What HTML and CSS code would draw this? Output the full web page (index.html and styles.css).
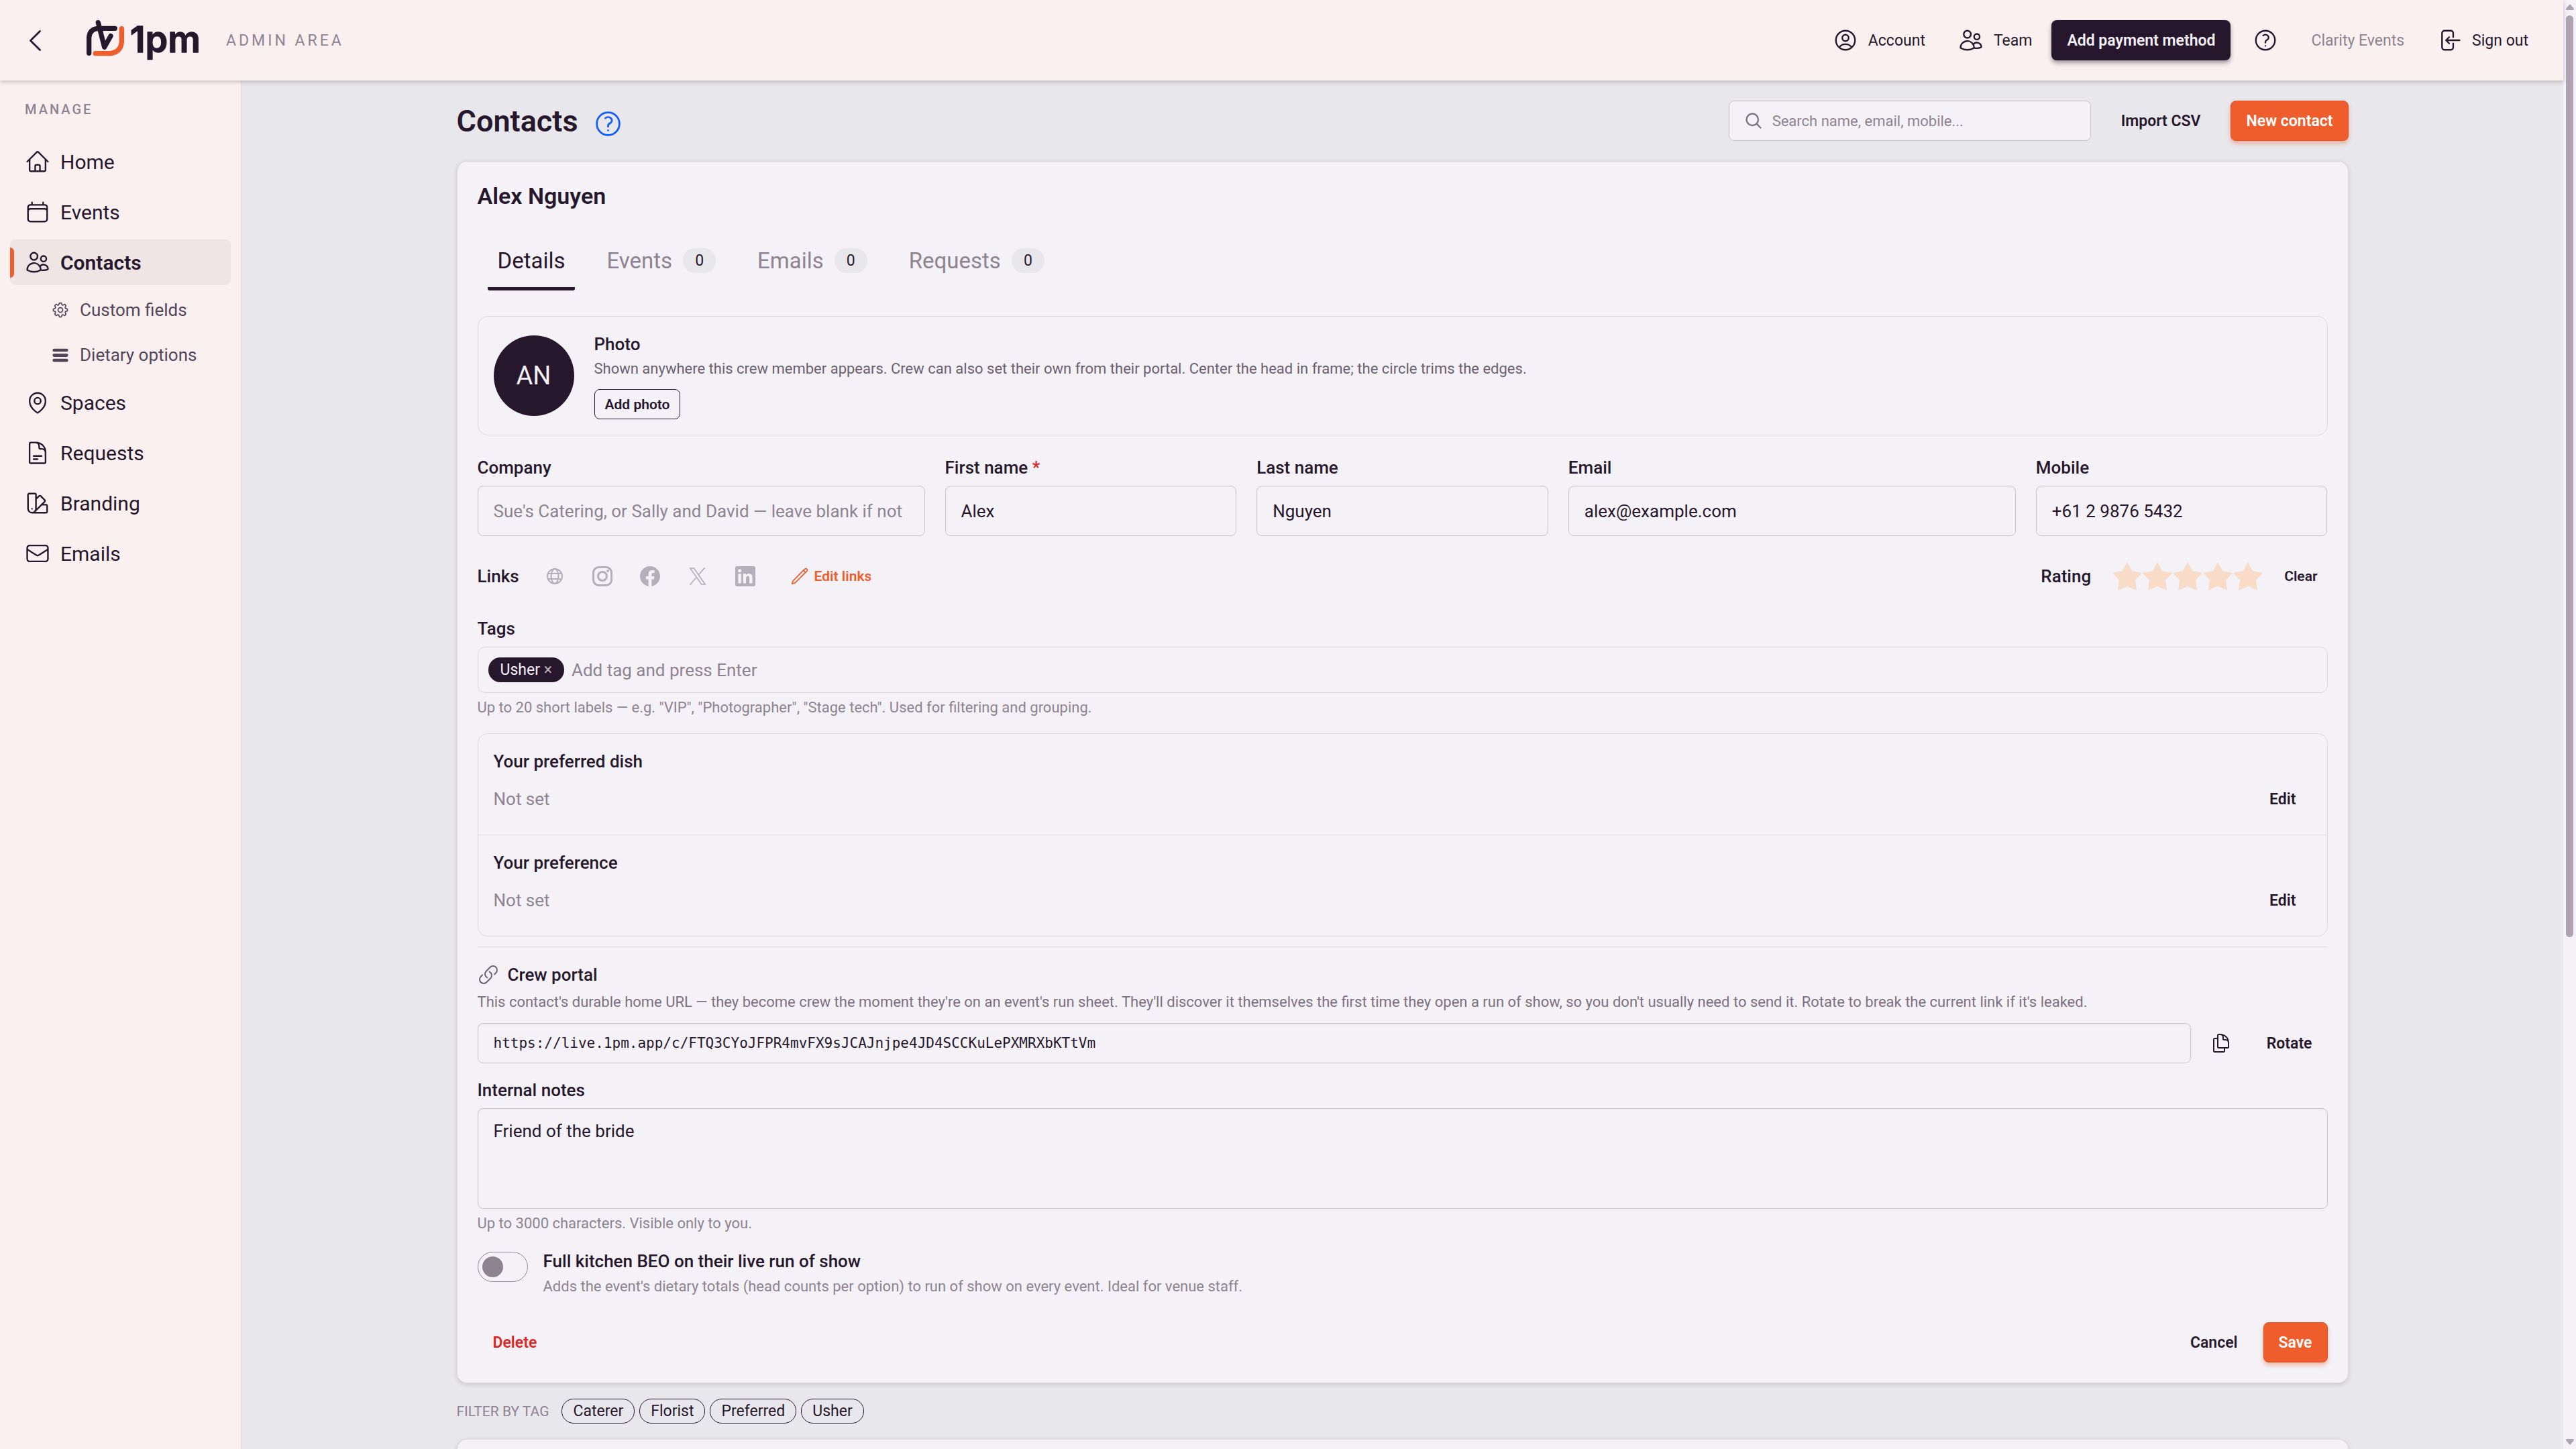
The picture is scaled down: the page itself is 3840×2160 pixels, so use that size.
FILE: index.html
```html
<!DOCTYPE html>
<html lang="en">
<head>
    <meta charset="UTF-8">
    <meta name="viewport" content="width=device-width, initial-scale=1.0">
    <title>Contacts - 1pm</title>
    <link rel="stylesheet" href="styles.css">
</head>
<body>

    <div class="app">
        <header class="topbar">
            <a href="#" class="back" aria-label="Back">
                <svg class="icon icon-lg" viewBox="0 0 24 24"><path d="M15.75 19.5 8.25 12l7.5-7.5"/></svg>
            </a>
            <a href="#" class="logo" aria-label="1pm">
                <svg viewBox="57 30 507 180">
                    <path class="logo-dark" d="M68 178V108Q70 72 106 67H184M109 41L137 151L165 101"/>
                    <path class="logo-orange" d="M214 68V128Q210 172 166 179H97"/>
                    <text class="logo-text" x="251" y="175">1pm</text>
                </svg>
            </a>
            <span class="area">ADMIN AREA</span>

            <nav class="topnav">
                <a href="#" class="toplink">
                    <svg class="icon" viewBox="0 0 24 24"><path d="M17.982 18.725A7.488 7.488 0 0 0 12 15.75a7.488 7.488 0 0 0-5.982 2.975m11.963 0a9 9 0 1 0-11.963 0m11.963 0A8.966 8.966 0 0 1 12 21a8.966 8.966 0 0 1-5.982-2.275M15 9.75a3 3 0 1 1-6 0 3 3 0 0 1 6 0Z"/></svg>
                    Account
                </a>
                <a href="#" class="toplink">
                    <svg class="icon" viewBox="0 0 24 24"><path d="M15 19.128a9.38 9.38 0 0 0 2.625.372 9.337 9.337 0 0 0 4.121-.952 4.125 4.125 0 0 0-7.533-2.493M15 19.128v-.003c0-1.113-.285-2.16-.786-3.07M15 19.128v.106A12.318 12.318 0 0 1 8.624 21c-2.331 0-4.512-.645-6.374-1.766l-.001-.109a6.375 6.375 0 0 1 11.964-3.07M12 6.375a3.375 3.375 0 1 1-6.75 0 3.375 3.375 0 0 1 6.75 0Zm8.25 2.25a2.625 2.625 0 1 1-5.25 0 2.625 2.625 0 0 1 5.25 0Z"/></svg>
                    Team
                </a>
                <button type="button" class="btn btn-dark">Add payment method</button>
                <button type="button" class="icon-btn" aria-label="Help">
                    <svg class="icon" viewBox="0 0 24 24"><path d="M9.879 7.519c1.171-1.025 3.071-1.025 4.242 0 1.172 1.025 1.172 2.687 0 3.712-.203.179-.43.326-.67.442-.745.361-1.45.999-1.45 1.827v.75M21 12a9 9 0 1 1-18 0 9 9 0 0 1 18 0Zm-9 5.25h.008v.008H12v-.008Z"/></svg>
                </button>
                <span class="org">Clarity Events</span>
                <a href="#" class="toplink">
                    <svg class="icon" viewBox="0 0 24 24"><path d="M15.75 9V5.25A2.25 2.25 0 0 0 13.5 3h-6a2.25 2.25 0 0 0-2.25 2.25v13.5A2.25 2.25 0 0 0 7.5 21h6a2.25 2.25 0 0 0 2.25-2.25V15M12 9l-3 3m0 0 3 3m-3-3h12.75"/></svg>
                    Sign out
                </a>
            </nav>
        </header>

        <nav class="sidebar">
            <div class="sidebar-title">MANAGE</div>
            <a href="#" class="side-item">
                <svg class="icon" viewBox="0 0 24 24"><path d="m2.25 12 8.954-8.955c.44-.439 1.152-.439 1.591 0L21.75 12M4.5 9.75v10.125c0 .621.504 1.125 1.125 1.125H9.75v-4.875c0-.621.504-1.125 1.125-1.125h2.25c.621 0 1.125.504 1.125 1.125V21h4.125c.621 0 1.125-.504 1.125-1.125V9.75M8.25 21h8.25"/></svg>
                Home
            </a>
            <a href="#" class="side-item">
                <svg class="icon" viewBox="0 0 24 24"><path d="M6.75 3v2.25M17.25 3v2.25M3 18.75V7.5a2.25 2.25 0 0 1 2.25-2.25h13.5A2.25 2.25 0 0 1 21 7.5v11.25m-18 0A2.25 2.25 0 0 0 5.25 21h13.5A2.25 2.25 0 0 0 21 18.75m-18 0v-7.5A2.25 2.25 0 0 1 5.25 9h13.5A2.25 2.25 0 0 1 21 11.25v7.5"/></svg>
                Events
            </a>
            <a href="#" class="side-item active">
                <svg class="icon" viewBox="0 0 24 24"><path d="M15 19.128a9.38 9.38 0 0 0 2.625.372 9.337 9.337 0 0 0 4.121-.952 4.125 4.125 0 0 0-7.533-2.493M15 19.128v-.003c0-1.113-.285-2.16-.786-3.07M15 19.128v.106A12.318 12.318 0 0 1 8.624 21c-2.331 0-4.512-.645-6.374-1.766l-.001-.109a6.375 6.375 0 0 1 11.964-3.07M12 6.375a3.375 3.375 0 1 1-6.75 0 3.375 3.375 0 0 1 6.75 0Zm8.25 2.25a2.625 2.625 0 1 1-5.25 0 2.625 2.625 0 0 1 5.25 0Z"/></svg>
                Contacts
            </a>
            <a href="#" class="side-item side-sub">
                <svg class="icon icon-sm" viewBox="0 0 24 24"><path d="M10.343 3.94c.09-.542.56-.94 1.11-.94h1.093c.55 0 1.02.398 1.11.94l.149.894c.07.424.384.764.78.93.398.164.855.142 1.205-.108l.737-.527a1.125 1.125 0 0 1 1.45.12l.773.774c.39.389.44 1.002.12 1.45l-.527.737c-.25.35-.272.806-.107 1.204.165.397.505.71.93.78l.893.15c.543.09.94.559.94 1.109v1.094c0 .55-.397 1.02-.94 1.11l-.894.149c-.424.07-.764.383-.929.78-.165.398-.143.854.107 1.204l.527.738c.32.447.269 1.06-.12 1.45l-.774.773a1.125 1.125 0 0 1-1.449.12l-.738-.527c-.35-.25-.806-.272-1.203-.107-.398.165-.71.505-.781.929l-.149.894c-.09.542-.56.94-1.11.94h-1.094c-.55 0-1.019-.398-1.11-.94l-.148-.894c-.071-.424-.384-.764-.781-.93-.398-.164-.854-.142-1.204.108l-.738.527c-.447.32-1.06.269-1.45-.12l-.773-.774a1.125 1.125 0 0 1-.12-1.45l.527-.737c.25-.35.272-.806.108-1.204-.165-.397-.506-.71-.93-.78l-.894-.15c-.542-.09-.94-.56-.94-1.109v-1.094c0-.55.398-1.02.94-1.11l.894-.149c.424-.07.765-.383.93-.78.165-.398.143-.854-.108-1.204l-.526-.738a1.125 1.125 0 0 1 .12-1.45l.773-.773a1.125 1.125 0 0 1 1.45-.12l.737.527c.35.25.807.272 1.204.107.397-.165.71-.505.78-.929l.15-.894ZM15 12a3 3 0 1 1-6 0 3 3 0 0 1 6 0Z"/></svg>
                Custom fields
            </a>
            <a href="#" class="side-item side-sub">
                <svg class="icon icon-sm icon-bars" viewBox="0 0 24 24"><path d="M4 6h16M4 12.500h16M4 19h16"/></svg>
                Dietary options
            </a>
            <a href="#" class="side-item">
                <svg class="icon" viewBox="0 0 24 24"><path d="M15 10.5a3 3 0 1 1-6 0 3 3 0 0 1 6 0Z"/><path d="M19.5 10.5c0 7.142-7.5 11.25-7.5 11.25S4.5 17.642 4.5 10.5a7.5 7.5 0 1 1 15 0Z"/></svg>
                Spaces
            </a>
            <a href="#" class="side-item">
                <svg class="icon" viewBox="0 0 24 24"><path d="M19.5 14.25v-2.625a3.375 3.375 0 0 0-3.375-3.375h-1.5A1.125 1.125 0 0 1 13.5 7.125v-1.5a3.375 3.375 0 0 0-3.375-3.375H8.25m0 12.75h7.5m-7.5 3H12M10.5 2.25H5.625c-.621 0-1.125.504-1.125 1.125v17.25c0 .621.504 1.125 1.125 1.125h12.75c.621 0 1.125-.504 1.125-1.125V11.25a9 9 0 0 0-9-9Z"/></svg>
                Requests
            </a>
            <a href="#" class="side-item">
                <svg class="icon" viewBox="0 0 24 24"><path d="M4.098 19.902a3.75 3.75 0 0 0 5.304 0l6.401-6.402M6.75 21A3.75 3.75 0 0 1 3 17.25V4.125C3 3.504 3.504 3 4.125 3h5.25c.621 0 1.125.504 1.125 1.125v4.072M6.75 21a3.75 3.75 0 0 0 3.75-3.75V8.197M6.75 21h13.125c.621 0 1.125-.504 1.125-1.125v-5.25c0-.621-.504-1.125-1.125-1.125h-4.072M10.5 8.197l2.88-2.88c.438-.439 1.15-.439 1.59 0l3.712 3.713c.44.44.44 1.152 0 1.59l-2.879 2.88M6.75 17.25h.008v.008H6.75v-.008Z"/></svg>
                Branding
            </a>
            <a href="#" class="side-item">
                <svg class="icon" viewBox="0 0 24 24"><path d="M21.75 6.75v10.5a2.25 2.25 0 0 1-2.25 2.25h-15a2.25 2.25 0 0 1-2.25-2.25V6.75m19.5 0A2.25 2.25 0 0 0 19.5 4.5h-15a2.25 2.25 0 0 0-2.25 2.25m19.5 0v.243a2.25 2.25 0 0 1-1.07 1.916l-7.5 4.615a2.25 2.25 0 0 1-2.36 0L3.32 8.91a2.25 2.25 0 0 1-1.07-1.916V6.75"/></svg>
                Emails
            </a>
        </nav>

        <main class="main">
            <div class="container">
                <div class="page-head">
                    <h1>Contacts</h1>
                    <button type="button" class="help-btn" aria-label="About contacts">
                        <svg class="icon icon-lg" viewBox="0 0 24 24"><path d="M9.879 7.519c1.171-1.025 3.071-1.025 4.242 0 1.172 1.025 1.172 2.687 0 3.712-.203.179-.43.326-.67.442-.745.361-1.45.999-1.45 1.827v.75M21 12a9 9 0 1 1-18 0 9 9 0 0 1 18 0Zm-9 5.25h.008v.008H12v-.008Z"/></svg>
                    </button>
                    <div class="page-actions">
                        <label class="search">
                            <svg class="icon icon-sm" viewBox="0 0 24 24"><path d="m21 21-5.197-5.197m0 0A7.5 7.5 0 1 0 5.196 5.196a7.5 7.5 0 0 0 10.607 10.607Z"/></svg>
                            <input type="search" placeholder="Search name, email, mobile..." aria-label="Search contacts">
                        </label>
                        <button type="button" class="btn">Import CSV</button>
                        <button type="button" class="btn btn-primary">New contact</button>
                    </div>
                </div>

                <form class="card" onsubmit="return false">
                    <h2>Alex Nguyen</h2>

                    <div class="tabs" role="tablist">
                        <button type="button" class="tab selected" role="tab" aria-selected="true">Details</button>
                        <button type="button" class="tab" role="tab">Events <span class="badge">0</span></button>
                        <button type="button" class="tab" role="tab">Emails <span class="badge">0</span></button>
                        <button type="button" class="tab" role="tab">Requests <span class="badge">0</span></button>
                    </div>

                    <section class="photo">
                        <div class="avatar">AN</div>
                        <div>
                            <h3>Photo</h3>
                            <p>Shown anywhere this crew member appears. Crew can also set their own from their portal. Center the head in frame; the circle trims the edges.</p>
                            <button type="button" class="btn-outline">Add photo</button>
                        </div>
                    </section>

                    <div class="fields">
                        <div class="field wide">
                            <label for="company">Company</label>
                            <input type="text" id="company" placeholder="Sue's Catering, or Sally and David — leave blank if not">
                        </div>
                        <div class="field">
                            <label for="first-name">First name <span class="required">*</span></label>
                            <input type="text" id="first-name" value="Alex">
                        </div>
                        <div class="field">
                            <label for="last-name">Last name</label>
                            <input type="text" id="last-name" value="Nguyen">
                        </div>
                        <div class="field wide">
                            <label for="email">Email</label>
                            <input type="email" id="email" value="alex@example.com">
                        </div>
                        <div class="field">
                            <label for="mobile">Mobile</label>
                            <input type="tel" id="mobile" value="+61 2 9876 5432">
                        </div>
                    </div>

                    <div class="links-row">
                        <span class="label">Links</span>
                        <div class="socials">
                            <svg class="social social-line" viewBox="-3 -3 30 30"><circle cx="12" cy="12" r="11"/><ellipse cx="12" cy="12" rx="5.5" ry="11"/><path d="M2.500 8h19M2.500 16h19"/></svg>
                            <svg class="social social-ring" viewBox="0 0 30 30"><rect x="1.500" y="1.500" width="27" height="27" rx="8"/><circle cx="15" cy="15" r="6.500"/><circle class="dot" cx="23" cy="7" r="2"/></svg>
                            <svg class="social" viewBox="0 0 24 24"><path d="M24 12.073c0-6.627-5.373-12-12-12s-12 5.373-12 12c0 5.99 4.388 10.954 10.125 11.854v-8.385H7.078v-3.47h3.047V9.43c0-3.007 1.792-4.669 4.533-4.669 1.312 0 2.686.235 2.686.235v2.953H15.83c-1.491 0-1.956.925-1.956 1.874v2.25h3.328l-.532 3.47h-2.796v8.385C19.612 23.027 24 18.062 24 12.073z"/></svg>
                            <svg class="social" viewBox="-2 -2 28 28"><path d="M14.234 10.162 22.977 0h-2.072l-7.591 8.824L7.251 0H.258l9.168 13.343L.258 24H2.33l8.016-9.318L16.749 24h6.993zm-2.837 3.299-.929-1.329L3.076 1.56h3.182l5.965 8.532.929 1.329 7.754 11.09h-3.182z"/></svg>
                            <svg class="social" viewBox="0 0 24 24"><path d="M20.447 20.452h-3.554v-5.569c0-1.328-.027-3.037-1.852-3.037-1.853 0-2.136 1.445-2.136 2.939v5.667H9.351V9h3.414v1.561h.046c.477-.9 1.637-1.85 3.37-1.85 3.601 0 4.267 2.37 4.267 5.455v6.286zM5.337 7.433c-1.144 0-2.063-.926-2.063-2.065 0-1.138.92-2.063 2.063-2.063 1.14 0 2.064.925 2.064 2.063 0 1.139-.925 2.065-2.064 2.065zm1.782 13.019H3.555V9h3.564v11.452zM22.225 0H1.771C.792 0 0 .774 0 1.729v20.542C0 23.227.792 24 1.771 24h20.451C23.2 24 24 23.227 24 22.271V1.729C24 .774 23.2 0 22.222 0h.003z"/></svg>
                        </div>
                        <button type="button" class="btn-text edit-links">
                            <svg class="icon icon-sm" viewBox="0 0 24 24"><path d="m16.862 4.487 1.687-1.688a1.875 1.875 0 1 1 2.652 2.652L6.832 19.82a4.5 4.500 0 0 1-1.897 1.13l-2.685.8.8-2.685a4.5 4.500 0 0 1 1.13-1.897L16.863 4.487Zm0 0L19.5 7.125"/></svg>
                            Edit links
                        </button>

                        <div class="rating">
                            <span class="label">Rating</span>
                            <div class="stars">
                                <button type="button" aria-label="1 star"><svg viewBox="0 0 44 42"><path d="M22 0l7 13 15 3-10 11 2 15-14-6-14 6 2-15L0 16l15-3z"/></svg></button>
                                <button type="button" aria-label="2 stars"><svg viewBox="0 0 44 42"><path d="M22 0l7 13 15 3-10 11 2 15-14-6-14 6 2-15L0 16l15-3z"/></svg></button>
                                <button type="button" aria-label="3 stars"><svg viewBox="0 0 44 42"><path d="M22 0l7 13 15 3-10 11 2 15-14-6-14 6 2-15L0 16l15-3z"/></svg></button>
                                <button type="button" aria-label="4 stars"><svg viewBox="0 0 44 42"><path d="M22 0l7 13 15 3-10 11 2 15-14-6-14 6 2-15L0 16l15-3z"/></svg></button>
                                <button type="button" aria-label="5 stars"><svg viewBox="0 0 44 42"><path d="M22 0l7 13 15 3-10 11 2 15-14-6-14 6 2-15L0 16l15-3z"/></svg></button>
                            </div>
                            <button type="button" class="btn-text">Clear</button>
                        </div>
                    </div>

                    <div class="field tags">
                        <label for="tags">Tags</label>
                        <div class="tag-box">
                            <span class="tag">Usher <button type="button" aria-label="Remove Usher">×</button></span>
                            <input type="text" id="tags" placeholder="Add tag and press Enter">
                        </div>
                        <p class="hint">Up to 20 short labels — e.g. "VIP", "Photographer", "Stage tech". Used for filtering and grouping.</p>
                    </div>

                    <section class="prefs">
                        <div class="pref">
                            <h3>Your preferred dish</h3>
                            <div class="pref-value"><span>Not set</span><button type="button" class="btn">Edit</button></div>
                        </div>
                        <div class="pref">
                            <h3>Your preference</h3>
                            <div class="pref-value"><span>Not set</span><button type="button" class="btn">Edit</button></div>
                        </div>
                    </section>

                    <section class="portal">
                        <h3>
                            <svg class="icon icon-link" viewBox="0 0 24 24"><path d="M13.19 8.688a4.5 4.500 0 0 1 1.242 7.244l-4.5 4.500a4.5 4.500 0 0 1-6.364-6.364l1.757-1.757m13.350-.622 1.757-1.757a4.5 4.500 0 0 0-6.364-6.364l-4.500 4.500a4.5 4.500 0 0 0 1.242 7.244"/></svg>
                            <label for="portal-url">Crew portal</label>
                        </h3>
                        <p class="portal-text">This contact's durable home URL — they become crew the moment they're on an event's run sheet. They'll discover it themselves the first time they open a run of show, so you don't usually need to send it. Rotate to break the current link if it's leaked.</p>
                        <div class="portal-row">
                            <input type="text" id="portal-url" readonly value="https://live.1pm.app/c/FTQ3CYoJFPR4mvFX9sJCAJnjpe4JD4SCCKuLePXMRXbKTtVm">
                            <button type="button" class="icon-btn" aria-label="Copy link">
                                <svg class="icon icon-copy" viewBox="0 0 24 24"><path d="M15.75 17.25v3.375c0 .621-.504 1.125-1.125 1.125h-9.750a1.125 1.125 0 0 1-1.125-1.125V7.875c0-.621.504-1.125 1.125-1.125H6.750a9.060 9.060 0 0 1 1.500.124m7.500 10.376h3.375c.621 0 1.125-.504 1.125-1.125V11.250c0-4.460-3.243-8.161-7.500-8.876a9.060 9.060 0 0 0-1.500-.124H9.375c-.621 0-1.125.504-1.125 1.125v3.500m7.500 10.375H9.375a1.125 1.125 0 0 1-1.125-1.125v-9.250m12 6.625v-1.875a3.375 3.375 0 0 0-3.375-3.375h-1.500a1.125 1.125 0 0 1-1.125-1.125v-1.500a3.375 3.375 0 0 0-3.375-3.375H9.750"/></svg>
                            </button>
                            <button type="button" class="btn">Rotate</button>
                        </div>
                    </section>

                    <div class="field notes">
                        <label for="notes">Internal notes</label>
                        <textarea id="notes">Friend of the bride</textarea>
                        <p class="hint">Up to 3000 characters. Visible only to you.</p>
                    </div>

                    <div class="toggle-row">
                        <input type="checkbox" class="toggle" id="beo" role="switch">
                        <div>
                            <label for="beo">Full kitchen BEO on their live run of show</label>
                            <p class="toggle-text">Adds the event's dietary totals (head counts per option) to run of show on every event. Ideal for venue staff.</p>
                        </div>
                    </div>

                    <div class="form-actions">
                        <button type="button" class="btn btn-danger">Delete</button>
                        <div class="form-actions-right">
                            <button type="button" class="btn">Cancel</button>
                            <button type="submit" class="btn btn-primary">Save</button>
                        </div>
                    </div>
                </form>

                <div class="filter">
                    <span>FILTER BY TAG</span>
                    <button type="button" class="chip">Caterer</button>
                    <button type="button" class="chip">Florist</button>
                    <button type="button" class="chip">Preferred</button>
                    <button type="button" class="chip">Usher</button>
                </div>

                <div class="card list"></div>
            </div>
        </main>
    </div>

    <div class="scrollbar" aria-hidden="true">
        <svg viewBox="0 0 12 9"><path d="M5 1q1-1 2 0l5 6q0 2-1 2H1Q0 9 0 7z"/></svg>
        <div class="scroll-track"><div class="scroll-thumb"></div></div>
        <svg viewBox="0 0 12 9"><path d="M5 8q1 1 2 0l5-6q0-2-1-2H1Q0 0 0 2z"/></svg>
    </div>

</body>
</html>
```
FILE: styles.css
```css
* {
    box-sizing: border-box;
}

body {
    margin: 0;
    height: 100vh;
    overflow: hidden;
    display: grid;
    grid-template-columns: 1fr 19px;
    background-color: #e8e7eb;
    color: #27172d;
    font-family: Roboto, Arial, sans-serif;
    font-size: 26px;
}

h1, h2, h3, p {
    margin: 0;
}

a {
    color: inherit;
    text-decoration: none;
}

button, input, textarea {
    font: inherit;
    color: inherit;
}

button {
    background: none;
    border: none;
    padding: 0;
    cursor: pointer;
}

svg {
    display: block;
    flex-shrink: 0;
}

.icon {
    width: 38px;
    height: 38px;
    fill: none;
    stroke: currentColor;
    stroke-width: 1.5;
    stroke-linecap: round;
    stroke-linejoin: round;
}

.icon-lg {
    width: 45px;
    height: 45px;
}

.icon-sm {
    width: 28px;
    height: 28px;
}

.icon-bars {
    stroke-width: 4;
}

.icon-copy, .icon-link {
    width: 32px;
    height: 32px;
}

.app {
    display: grid;
    grid-template: 120px 1fr / 360px 1fr;
    min-width: 0;
    height: 100vh;
}

/* Top bar */
.topbar {
    grid-column: 1 / -1;
    z-index: 1;
    display: flex;
    align-items: center;
    padding: 0 30px;
    background-color: #faf0ef;
    box-shadow: 0 2px 6px rgba(39, 23, 45, 0.25);
}

.logo {
    margin: 0 39px 0 54px;
}

.logo svg {
    width: 169px;
    height: 60px;
    overflow: visible;
}

.logo-dark, .logo-orange {
    fill: none;
    stroke: #27172d;
    stroke-width: 22;
    stroke-linecap: round;
    stroke-linejoin: round;
}

.logo-orange {
    stroke: #ee5d2b;
}

.logo-text {
    font-family: Inter, sans-serif;
    font-size: 162px;
    font-weight: 600;
    fill: #27172d;
    stroke: #27172d;
    stroke-width: 4;
    stroke-linejoin: round;
}

.area {
    font-size: 23px;
    letter-spacing: 4px;
    color: #8e8391;
}

.topnav {
    display: flex;
    align-items: center;
    margin-left: auto;
    font-size: 23px;
}

.toplink {
    display: flex;
    align-items: center;
    gap: 15px;
    height: 60px;
    padding: 0 22px;
}

.toplink + .toplink {
    margin-left: 5px;
}

.org {
    margin: 0 26px 0 38px;
    color: #8e8391;
}

.btn {
    height: 60px;
    padding: 0 22px;
    border: 1px solid transparent;
    border-radius: 8px;
    font-size: 23px;
    font-weight: 600;
    white-space: nowrap;
}

.btn-dark {
    margin: 0 22px 0 7px;
    background-color: #27172d;
    color: #f4f2f7;
    box-shadow: 0 4px 6px rgba(39, 23, 45, 0.4);
}

.btn-primary {
    background-color: #ee5d2b;
    border-color: #d95326;
    color: #fff;
    box-shadow: 0 4px 6px rgba(238, 93, 43, 0.4);
}

.btn-danger {
    color: #dc2626;
}

.icon-btn {
    display: grid;
    place-items: center;
    width: 60px;
    height: 60px;
}

/* Sidebar */
.sidebar {
    display: flex;
    flex-direction: column;
    gap: 7px;
    padding: 30px 15px;
    background-color: #faf0ef;
    border-right: 1px solid #dcd8de;
}

.sidebar-title {
    margin: 0 22px 24px;
    font-size: 20px;
    line-height: 26px;
    font-weight: 500;
    letter-spacing: 3px;
    color: #8e8391;
}

.side-item {
    display: flex;
    align-items: center;
    gap: 15px;
    height: 68px;
    padding: 0 22px;
    border-radius: 8px;
    font-size: 30px;
}

.side-sub {
    height: 60px;
    padding-left: 61px;
    font-size: 26px;
    color: #52455a;
}

.side-item.active {
    position: relative;
    background-color: #eee5e4;
    font-weight: 600;
}

.side-item.active::before {
    content: "";
    position: absolute;
    left: 0;
    width: 6px;
    height: 45px;
    border-radius: 0 6px 6px 0;
    background-color: #ee5d2b;
}

/* Page */
.main {
    padding: 30px 60px;
    min-width: 0;
    overflow: hidden;
}

.container {
    max-width: 2820px;
    margin: 0 auto;
}

.page-head {
    display: flex;
    align-items: center;
    height: 60px;
    margin-bottom: 30px;
}

h1 {
    font-size: 45px;
    font-weight: 600;
}

.help-btn {
    margin: 8px 0 0 22px;
    color: #155dfc;
}

.page-actions {
    display: flex;
    gap: 22px;
    margin-left: auto;
}

.search {
    display: flex;
    align-items: center;
    gap: 14px;
    width: 540px;
    padding: 0 22px;
    border: 1px solid #c9c5cd;
    border-radius: 8px;
    background-color: #f4f2f7;
    color: #7d7080;
}

.search .icon {
    stroke-width: 2;
}

.search input {
    flex: 1;
    min-width: 0;
    padding: 0;
    border: none;
    outline: none;
    background: none;
    font-size: 22px;
}

::placeholder {
    color: #8e8391;
    opacity: 1;
}

.card {
    padding: 30px;
    border: 1px solid #dcd9e0;
    border-radius: 15px;
    background-color: #f4f2f7;
    box-shadow: 0 2px 6px rgba(39, 23, 45, 0.15);
}

.card.list {
    height: 400px;
}

h2 {
    font-size: 34px;
    line-height: 42px;
    font-weight: 600;
}

h3, .label, .field label, .toggle-row label {
    font-size: 26px;
    line-height: 36px;
    font-weight: 500;
}

.tabs {
    display: flex;
    gap: 32px;
    margin: 30px 0 38px;
    padding: 0 15px;
}

.tab {
    display: flex;
    align-items: center;
    gap: 16px;
    padding: 23px 15px 17px;
    border-bottom: 5px solid transparent;
    font-size: 33px;
    line-height: 45px;
    color: #8e8391;
}

.tab.selected {
    border-color: #27172d;
    border-radius: 3px;
    color: #27172d;
}

.badge {
    padding: 0 18px;
    border-radius: 18px;
    background-color: #e8e7eb;
    color: #27172d;
    font-size: 23px;
    line-height: 37px;
}

.photo {
    display: flex;
    align-items: center;
    gap: 30px;
    padding: 23px;
    border: 1px solid #dcd9e0;
    border-radius: 15px;
}

.photo p {
    font-size: 22px;
    line-height: 38px;
    color: #6b5f6f;
}

.avatar {
    display: grid;
    place-items: center;
    width: 120px;
    height: 120px;
    border-radius: 50%;
    background-color: #27172d;
    color: #f4f2f7;
    font-size: 38px;
}

.btn-outline {
    height: 45px;
    margin-top: 11px;
    padding: 0 15px;
    border: 1px solid #27172d;
    border-radius: 8px;
    font-size: 21px;
    font-weight: 600;
    display: block;
}

.fields {
    display: grid;
    grid-template-columns: repeat(12, 1fr);
    gap: 30px;
    margin: 30px 0;
}

.field {
    grid-column: span 2;
    display: flex;
    flex-direction: column;
}

.field.wide {
    grid-column: span 3;
}

.required {
    color: #dc2626;
}

.field > input, .field textarea, .portal-row input {
    width: 100%;
    height: 75px;
    margin-top: 9px;
    padding: 0 23px;
    border: 1px solid #c9c5cd;
    border-radius: 8px;
    background: none;
    box-shadow: inset 0 2px 2px rgba(39, 23, 45, 0.03);
}

.links-row {
    display: flex;
    align-items: center;
    height: 60px;
}

.socials {
    display: flex;
    gap: 41px;
    margin: 0 52px 0 38px;
}

.social {
    width: 30px;
    height: 30px;
    fill: #b5afb9;
}

.social-line, .social-ring {
    fill: none;
    stroke: #b5afb9;
    stroke-width: 2;
}

.social-ring {
    stroke-width: 3;
}

.social-ring .dot {
    fill: #b5afb9;
    stroke: none;
}

.btn-text {
    font-size: 21px;
    font-weight: 600;
}

.edit-links {
    display: flex;
    align-items: center;
    gap: 8px;
    color: #ee5d2b;
}

.rating {
    display: flex;
    align-items: center;
    gap: 32px;
    margin-left: auto;
    padding-right: 15px;
}

.stars {
    display: flex;
    gap: 1px;
}

.stars svg {
    width: 44px;
    height: 42px;
    fill: #f8dcc8;
}

.tags {
    margin-top: 30px;
}

.tag-box {
    display: flex;
    align-items: center;
    gap: 11px;
    height: 69px;
    margin-top: 9px;
    padding: 0 15px;
    border: 1px solid #dcd9e0;
    border-radius: 11px;
}

.tag-box input {
    flex: 1;
    padding: 0;
    border: none;
    outline: none;
    background: none;
}

.tag {
    padding: 0 18px;
    border-radius: 18px;
    background-color: #27172d;
    color: #f4f2f7;
    font-size: 23px;
    line-height: 37px;
}

.tag button {
    color: #b5afb9;
}

.hint {
    margin-top: 7px;
    font-size: 22px;
    line-height: 30px;
    color: #8e8391;
}

.prefs {
    margin: 23px 0 15px;
    border: 1px solid #dcd9e0;
    border-radius: 15px;
}

.pref {
    padding: 23px;
}

.pref + .pref {
    border-top: 1px solid #e5e2e9;
}

.pref-value {
    display: flex;
    align-items: center;
    justify-content: space-between;
    margin-top: 8px;
    color: #8e8391;
}

.pref-value .btn {
    color: #27172d;
}

/* Crew portal */
.portal {
    padding: 23px 0 22px;
    border-top: 1px solid #dcd9e0;
}

.portal h3 {
    display: flex;
    align-items: center;
    gap: 13px;
}

.portal .icon-link {
    color: #6b5f6f;
}

.portal-text {
    margin: 8px 0 16px;
    font-size: 22px;
    line-height: 30px;
    color: #7d7080;
}

.portal-row {
    display: flex;
    gap: 15px;
}

.portal-row input {
    flex: 1;
    height: 60px;
    margin: 0;
    font-family: "DejaVu Sans Mono", monospace;
    font-size: 21px;
}

.field textarea {
    height: 150px;
    padding: 15px 23px;
    line-height: 36px;
    resize: none;
}

.toggle-row {
    display: flex;
    align-items: flex-start;
    gap: 23px;
    margin: 23px 0 38px;
}

.toggle {
    appearance: none;
    display: flex;
    align-items: center;
    width: 75px;
    height: 45px;
    margin: 4px 0 0;
    padding: 0 6px;
    border: 1px solid #8e8391;
    border-radius: 23px;
}

.toggle::before {
    content: "";
    width: 31px;
    height: 31px;
    border-radius: 50%;
    background-color: #8e8391;
}

.toggle-text {
    margin-top: 5px;
    font-size: 22px;
    line-height: 30px;
    color: #8e8391;
}

.form-actions, .form-actions-right {
    display: flex;
    justify-content: space-between;
    gap: 15px;
}

.filter {
    display: flex;
    align-items: center;
    gap: 7px;
    margin: 23px 0;
    font-size: 21px;
    color: #8e8391;
}

.filter span {
    margin-right: 12px;
}

.chip {
    height: 37px;
    padding: 0 16px;
    border: 1px solid #27172d;
    border-radius: 18px;
    font-size: 23px;
    color: #27172d;
}

/* Scroll rail */
.scrollbar {
    display: flex;
    flex-direction: column;
    align-items: center;
    gap: 8px;
    padding: 6px 0;
    background-color: #f4f2f7;
}

.scrollbar svg {
    width: 12px;
    height: 9px;
    fill: #aca5b1;
}

.scroll-track {
    flex: 1;
}

.scroll-thumb {
    width: 11px;
    height: 65%;
    border-radius: 6px;
    background-color: #aca5b1;
}
```
